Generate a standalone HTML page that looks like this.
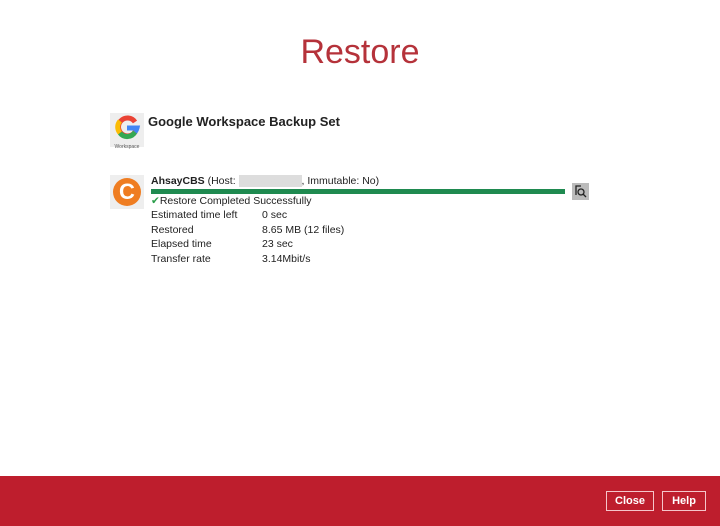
<!DOCTYPE html>
<html><head><meta charset="utf-8"><style>
body{margin:0;width:720px;height:526px;background:#fff;position:relative;overflow:hidden;font-family:"Liberation Sans",sans-serif;color:#222}
.a{position:absolute}
.t{font-size:10.5px;line-height:14.5px}
</style></head><body>
<div class="a" style="left:0;top:33px;width:720px;text-align:center;font-size:34px;color:#b5323a;font-weight:300">Restore</div>
<div class="a" style="left:110px;top:113px;width:34px;height:34px;background:#eee">
<svg width="34" height="28" viewBox="0 0 34 28"><g fill="none" stroke-width="5"><path d="M25 9 A9 9 0 1 0 26 17" stroke="#ea4335"/><path d="M10 8 A9 9 0 0 0 10 20" stroke="#fbbc05"/><path d="M10 20 A9 9 0 0 0 25 19" stroke="#34a853"/><path d="M17 15 H27 A9 9 0 0 1 25 19" stroke="#4285f4"/></g></svg>
<div style="font-size:5px;text-align:center;color:#555;margin-top:-2px">Workspace</div></div>
<div class="a" style="left:148px;top:114px;font-size:13px;font-weight:bold">Google Workspace Backup Set</div>
<div class="a" style="left:110px;top:175px;width:34px;height:34px;background:#eee"><div style="margin:3px;width:28px;height:28px;border-radius:50%;background:#ef7d22;color:#fff;font-weight:bold;font-size:22px;text-align:center;line-height:28px">C</div></div>
<div class="a t" style="left:151px;top:174px"><b>AhsayCBS</b> (Host: <span style="background:#ddd;color:#ddd">xxxxxxxxxxxx</span>, Immutable: No)</div>
<div class="a" style="left:151px;top:189px;width:414px;height:5px;background:#1f8a50"></div>
<div class="a" style="left:572px;top:183px;width:17px;height:17px;background:#bbb"><svg width="17" height="17" viewBox="0 0 17 17" fill="none" stroke="#222" stroke-width="1.3"><path d="M4 12V3h5"/><circle cx="9" cy="9" r="3"/><path d="M11 11l3 3"/></svg></div>
<div class="a t" style="left:151px;top:194px"><span style="color:#2a9d4a">✔</span>Restore Completed Successfully</div>
<div class="a t" style="left:151px;top:208px">Estimated time left<br>Restored<br>Elapsed time<br>Transfer rate</div>
<div class="a t" style="left:262px;top:208px">0 sec<br>8.65 MB (12 files)<br>23 sec<br>3.14Mbit/s</div>
<div class="a" style="left:0;top:476px;width:720px;height:50px;background:#be1e2d"></div>
<div class="a" style="left:606px;top:491px;width:46px;height:18px;border:1.5px solid #f5c5ca;color:#fff;font-size:11px;font-weight:bold;text-align:center;line-height:18px">Close</div>
<div class="a" style="left:662px;top:491px;width:42px;height:18px;border:1.5px solid #f5c5ca;color:#fff;font-size:11px;font-weight:bold;text-align:center;line-height:18px">Help</div>
</body></html>
